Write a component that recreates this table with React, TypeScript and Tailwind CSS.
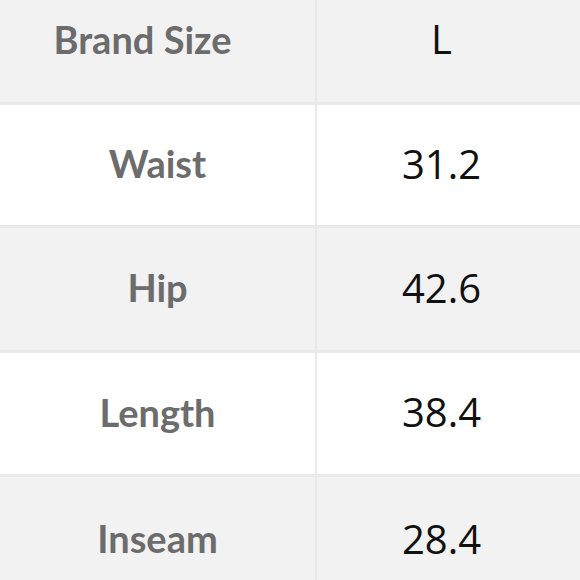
import React from "react";

const rows = [
  { label: "Waist", value: "31.2", bg: "bg-white", h: "h-[120px]" },
  { label: "Hip", value: "42.6", bg: "bg-[#f2f2f2]", h: "h-[122px]" },
  { label: "Length", value: "38.4", bg: "bg-white", h: "h-[121px]" },
];

export default function App() {
  return (
    <div className="w-[580px] h-[580px] overflow-hidden bg-[#e9e9e9]">
      <div className="grid grid-cols-[315px_263px] gap-x-[2px] gap-y-[3px]">
        {/* header row, cropped at the top */}
        <div className="h-[102px] bg-[#f2f2f2] flex items-center justify-center pb-[24px] pr-[30px]">
          <span className="font-['Lato'] font-bold text-[38px] text-[#6c6c6c]">
            Brand Size
          </span>
        </div>
        <div className="h-[102px] bg-[#f2f2f2] flex items-center justify-center pb-[24px] pr-[14px]">
          <span className="font-['Open_Sans'] text-[40px] text-[#111]">L</span>
        </div>

        {rows.map((r) => (
          <React.Fragment key={r.label}>
            <div className={`${r.h} ${r.bg} flex items-center justify-center pb-[3px]`}>
              <span className="font-['Lato'] font-bold text-[38px] text-[#6c6c6c]">
                {r.label}
              </span>
            </div>
            <div className={`${r.h} ${r.bg} flex items-center justify-center pr-[14px] pb-[3px]`}>
              <span className="font-['Open_Sans'] text-[40px] text-[#111]">
                {r.value}
              </span>
            </div>
          </React.Fragment>
        ))}

        {/* last row, cropped at the bottom */}
        <div className="h-[123px] bg-[#f2f2f2] flex items-center justify-center">
          <span className="font-['Lato'] font-bold text-[38px] text-[#6c6c6c]">
            Inseam
          </span>
        </div>
        <div className="h-[123px] bg-[#f2f2f2] flex items-center justify-center pr-[14px]">
          <span className="font-['Open_Sans'] text-[40px] text-[#111]">28.4</span>
        </div>
      </div>
    </div>
  );
}
